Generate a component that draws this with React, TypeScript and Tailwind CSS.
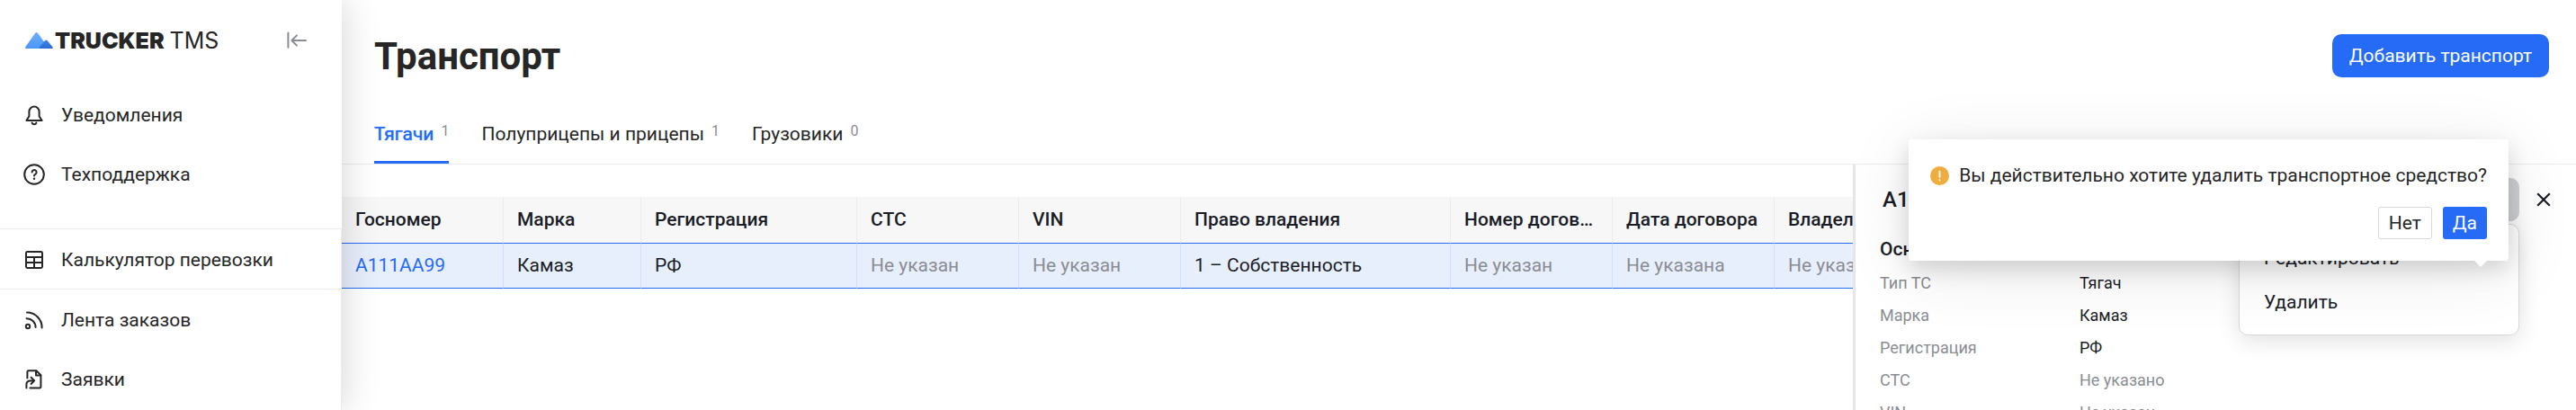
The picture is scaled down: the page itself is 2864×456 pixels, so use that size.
import type { ReactNode } from "react";
import clsx from "clsx";

type IconProps = { children: ReactNode; className?: string };

function Icon({ children, className }: IconProps) {
  return (
    <svg
      viewBox="0 0 24 24"
      fill="none"
      stroke="currentColor"
      strokeWidth={2}
      strokeLinecap="round"
      strokeLinejoin="round"
      aria-hidden="true"
      className={clsx("size-6 shrink-0", className)}
    >
      {children}
    </svg>
  );
}

const BellIcon = () => (
  <Icon>
    <path d="M12 2.6a5.6 5.6 0 0 0-5.6 5.6v5L3.4 18h17.2l-3-4.8v-5A5.6 5.6 0 0 0 12 2.6z" />
    <path d="M9.6 20.6a2.5 2.2 0 0 0 4.8 0" />
  </Icon>
);

const HelpIcon = () => (
  <Icon>
    <circle cx="12" cy="12" r="10.8" />
    <path d="M9.6 9.6a2.5 2.5 0 1 1 3.8 2.1c-.9.5-1.4.9-1.4 1.8" />
    <path d="M12 16.6v.2" strokeWidth={2.4} />
  </Icon>
);

const TableIcon = () => (
  <Icon>
    <rect x="3" y="3" width="18" height="18" rx="1.4" />
    <path d="M3 9h18M3 15h18M12 9v12" />
  </Icon>
);

const FeedIcon = () => (
  <Icon>
    <circle cx="5" cy="19" r="2.2" />
    <path d="M3.6 10.2a9.8 9.8 0 0 1 10 9.8M4 3.6A16.6 16.6 0 0 1 20.6 20.4" />
  </Icon>
);

const RequestIcon = () => (
  <Icon>
    <path d="M4.4 10.4V3.6a1.4 1.4 0 0 1 1.4-1.4h8.6l5 5v13a1.4 1.4 0 0 1-1.4 1.4H7.4" />
    <path d="M14 2.4V7.6h5.2M3.4 21.6v-4.2a4 4 0 0 1 4-4h4.4M8.6 9.8l3.6 3.6-3.6 3.6" />
  </Icon>
);

const topLinks = [
  { label: "Уведомления", icon: <BellIcon /> },
  { label: "Техподдержка", icon: <HelpIcon /> },
];

const bottomLinks = [
  { label: "Лента заказов", icon: <FeedIcon /> },
  { label: "Заявки", icon: <RequestIcon /> },
];

const tabs = [
  { label: "Тягачи", count: 1 },
  { label: "Полуприцепы и прицепы", count: 1 },
  { label: "Грузовики", count: 0 },
];

const columns = [
  { title: "Госномер", value: "А111АА99", width: "w-[180px]", kind: "link" },
  { title: "Марка", value: "Камаз", width: "w-[153px]", kind: "text" },
  { title: "Регистрация", value: "РФ", width: "w-[240px]", kind: "text" },
  { title: "СТС", value: "Не указан", width: "w-[180px]", kind: "empty" },
  { title: "VIN", value: "Не указан", width: "w-[180px]", kind: "empty" },
  { title: "Право владения", value: "1 – Собственность", width: "w-[300px]", kind: "text" },
  { title: "Номер договора", value: "Не указан", width: "w-[180px]", kind: "empty" },
  { title: "Дата договора", value: "Не указана", width: "w-[180px]", kind: "empty" },
  { title: "Владелец", value: "Не указан", width: "w-[180px]", kind: "empty" },
];

const details = [
  { label: "Тип ТС", value: "Тягач" },
  { label: "Марка", value: "Камаз" },
  { label: "Регистрация", value: "РФ" },
  { label: "СТС", value: "Не указано", empty: true },
  { label: "VIN", value: "Не указан", empty: true },
];

function NavLink({ label, icon }: { label: string; icon: ReactNode }) {
  return (
    <a href="#" className="flex h-[66px] items-center gap-[18px] pt-[2px] pl-[26px]">
      {icon}
      {label}
    </a>
  );
}

function Sidebar() {
  return (
    <aside className="relative z-10 flex w-[380px] shrink-0 flex-col bg-white text-[#262626] shadow-[0_0_40px_rgba(0,0,0,0.18)]">
      <div className="flex h-[90px] items-center justify-between pr-[38px] pl-7">
        <a href="#" className="flex items-center gap-[2px] font-['Inter',sans-serif] text-[25px] leading-7">
          <svg viewBox="0 0 31 18" className="h-[18px] w-[31px]" aria-hidden="true">
            <defs>
              <linearGradient id="peak" x1="0" y1="0" x2="0" y2="1">
                <stop offset="0" stopColor="#6fb0fb" />
                <stop offset="1" stopColor="#4a94f5" />
              </linearGradient>
              <linearGradient id="hill" x1="0" y1="0" x2="0" y2="1">
                <stop offset="0" stopColor="#3f86e8" />
                <stop offset="1" stopColor="#2a6bd2" />
              </linearGradient>
            </defs>
            <path d="M1 18c-1 0-1.200-1-.6-1.900L11 .9c.9-1.200 2.400-1.200 3.200 0L25 16v2z" fill="url(#peak)" />
            <path d="M16.600 18c-1 0-1.200-1-.6-1.800l6-7.200c.7-.8 1.800-.8 2.500 0l6 7.200c.6.8.4 1.800-.6 1.800z" fill="url(#hill)" />
          </svg>
          <span className="font-black">TRUCKER</span>
          <span className="ml-1 font-normal">TMS</span>
        </a>
        <button type="button" aria-label="Свернуть меню" className="text-[#888d93]">
          <Icon>
            <path d="M2.400 3.400v16.400M7 12h15M12 6.400 6.400 12l5.600 5.600" />
          </Icon>
        </button>
      </div>
      <nav className="mt-1 flex grow flex-col">
        {topLinks.map((link) => (
          <NavLink key={link.label} {...link} />
        ))}
        <div className="mt-7 grow border-t border-r border-[#ececec]">
          <div className="border-b border-[#ececec]">
            <NavLink label="Калькулятор перевозки" icon={<TableIcon />} />
          </div>
          {bottomLinks.map((link) => (
            <NavLink key={link.label} {...link} />
          ))}
        </div>
      </nav>
    </aside>
  );
}

function VehicleTable() {
  return (
    <div className="min-w-0 grow overflow-hidden pt-9">
      <table className="w-[1773px] table-fixed border-separate border-spacing-0 text-left text-[#1a1d27]">
        <thead>
          <tr className="h-[51px] bg-[#f7f7f7]">
            {columns.map((col) => (
              <th
                key={col.title}
                className={clsx("truncate border-r border-[#ececec] px-[15px] font-medium", col.width)}
              >
                {col.title}
              </th>
            ))}
          </tr>
        </thead>
        <tbody>
          <tr className="h-[51px] bg-[#e8effc]">
            {columns.map((col) => (
              <td
                key={col.title}
                className={clsx(
                  "truncate border-y border-r border-y-[#256bf6] border-r-[#cfdffc] px-[15px]",
                  col.kind === "empty" && "text-[#8a8d92]"
                )}
              >
                {col.kind === "link" ? (
                  <a href="#" className="text-[#256bf6]">
                    {col.value}
                  </a>
                ) : (
                  col.value
                )}
              </td>
            ))}
          </tr>
        </tbody>
      </table>
    </div>
  );
}

function DeleteConfirm() {
  return (
    <div
      role="dialog"
      aria-label="Удаление"
      className="absolute -top-[43px] right-3 z-20 rounded-[3px] bg-white p-6 text-[#262626] shadow-[0_9px_24px_rgba(0,0,0,0.14),0_12px_72px_rgba(0,0,0,0.1)]"
    >
      <div className="flex h-[33px] items-center gap-[11px] whitespace-nowrap">
        <svg viewBox="0 0 21 21" className="size-[21px] shrink-0" aria-hidden="true">
          <circle cx="10.500" cy="10.500" r="10.500" fill="#efad3f" />
          <path d="M10.500 5.600v6.200M10.500 15.200v.2" stroke="#fff" strokeWidth="1.800" strokeLinecap="round" />
        </svg>
        Вы действительно хотите удалить транспортное средство?
      </div>
      <div className="mt-[18px] flex justify-end gap-3">
        <button type="button" className="h-9 rounded-[3px] border border-[#d9d9d9] bg-white px-[11px]">
          Нет
        </button>
        <button type="button" className="h-9 rounded-[3px] bg-[#256bf6] px-[11px] text-white">
          Да
        </button>
      </div>
      <svg viewBox="0 0 14 7" className="absolute top-full right-6 h-[7px] w-[14px]" aria-hidden="true">
        <path d="M0 0h14L7 7z" fill="#fff" />
      </svg>
    </div>
  );
}

function DetailsPanel() {
  return (
    <section className="w-[804px] shrink-0 border-l-[3px] border-[#e5e6e8] pt-[15px] text-[#1a1d27]">
      <div className="flex h-12 items-center justify-between pr-7 pl-[30px]">
        <h2 className="text-2xl font-medium">А111АА99</h2>
        <div className="flex items-center gap-[19px]">
          <div className="relative">
            <button type="button" className="h-12 rounded-[10px] bg-[#d0d1d5] px-[19px]">
              Действия
            </button>
            <div
              role="menu"
              className="absolute top-[51px] right-0 w-[312px] rounded-[10px] border border-[#d6d8db] bg-white pt-[13px] pb-[11px] shadow-[0_6px_24px_rgba(0,0,0,0.12)]"
            >
              <button type="button" role="menuitem" className="flex h-[49px] w-full items-center px-[27px]">
                Редактировать
              </button>
              <button type="button" role="menuitem" className="flex h-[49px] w-full items-center px-[27px]">
                Удалить
              </button>
            </div>
            <DeleteConfirm />
          </div>
          <button type="button" aria-label="Закрыть">
            <svg
              viewBox="0 0 16 16"
              className="size-4"
              fill="none"
              stroke="currentColor"
              strokeWidth={2.2}
              aria-hidden="true"
            >
              <path d="M1.200 1.200l13.600 13.600M14.800 1.200 1.200 14.800" />
            </svg>
          </button>
        </div>
      </div>
      <h3 className="mt-[15px] pl-[27px] font-medium leading-8">Основная информация</h3>
      <dl className="mt-1 pl-[27px] text-lg leading-9">
        {details.map((row) => (
          <div key={row.label} className="flex">
            <dt className="w-[222px] text-[#8a8d92]">{row.label}</dt>
            <dd className={clsx(row.empty && "text-[#8a8d92]")}>{row.value}</dd>
          </div>
        ))}
      </dl>
    </section>
  );
}

export default function App() {
  return (
    <div className="flex h-screen overflow-hidden bg-white font-['Roboto',sans-serif] text-[21px] leading-[33px]">
      <Sidebar />
      <main className="flex min-w-0 grow flex-col text-[#262626]">
        <header className="flex h-[124px] shrink-0 items-center justify-between pr-[30px] pl-9">
          <h1 className="text-[42px] font-bold leading-[51px]">Транспорт</h1>
          <button type="button" className="h-12 rounded-[10px] bg-[#256bf6] px-[19px] text-white">
            Добавить транспорт
          </button>
        </header>
        <div role="tablist" className="flex h-[59px] shrink-0 gap-9 border-b border-[#ececec] pl-9">
          {tabs.map((tab, i) => (
            <button
              key={tab.label}
              type="button"
              role="tab"
              aria-selected={i === 0}
              className={clsx(
                "flex items-center gap-2 border-b-[3px] pb-1",
                i === 0
                  ? "border-[#256bf6] text-[#256bf6] [text-shadow:0_0_1px_currentColor]"
                  : "border-transparent"
              )}
            >
              {tab.label}
              <span className="pb-2 text-base leading-6 text-[#8a8d92] [text-shadow:none]">{tab.count}</span>
            </button>
          ))}
        </div>
        <div className="flex min-h-0 grow">
          <VehicleTable />
          <DetailsPanel />
        </div>
      </main>
    </div>
  );
}
